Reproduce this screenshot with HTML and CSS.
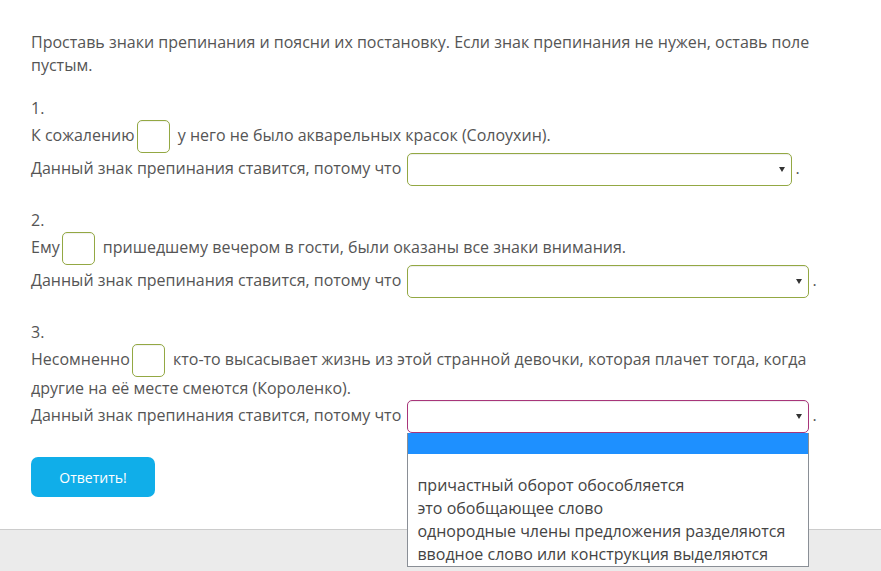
FILE: index.html
```html
<!DOCTYPE html>
<html lang="ru">
<head>
<meta charset="utf-8">
<title>Задание</title>
<link rel="stylesheet" href="styles.css">
</head>
<body>
<main class="content">
  <p class="intro">Проставь знаки препинания и поясни их постановку. Если знак препинания не нужен, оставь поле пустым.</p>

  <section class="task">
    <div class="num">1.</div>
    <div class="sentence">К сожалению<span class="gap-box"></span> у него не было акварельных красок (Солоухин).</div>
    <div class="reason">Данный знак препинания ставится, потому что <span class="select narrow"><span class="arrow"></span></span><span class="dot">.</span></div>
  </section>

  <section class="task">
    <div class="num">2.</div>
    <div class="sentence">Ему<span class="gap-box"></span> пришедшему вечером в гости, были оказаны все знаки внимания.</div>
    <div class="reason">Данный знак препинания ставится, потому что <span class="select"><span class="arrow"></span></span><span class="dot">.</span></div>
  </section>

  <section class="task last">
    <div class="num">3.</div>
    <div class="sentence">Несомненно<span class="gap-box"></span> кто-то высасывает жизнь из этой странной девочки, которая плачет тогда, когда другие на её месте смеются (Короленко).</div>
    <div class="reason">Данный знак препинания ставится, потому что <span class="select focused"><span class="arrow"></span>
        <ul class="dropdown">
          <li class="opt empty active"></li>
          <li class="opt empty"></li>
          <li class="opt">причастный оборот обособляется</li>
          <li class="opt">это обобщающее слово</li>
          <li class="opt">однородные члены предложения разделяются</li>
          <li class="opt">вводное слово или конструкция выделяются</li>
        </ul>
      </span><span class="dot">.</span></div>
  </section>

  <button class="submit" type="button">Ответить!</button>
</main>
<footer class="footer"></footer>
</body>
</html>
```

FILE: styles.css
```css
html, body {
  margin: 0;
  padding: 0;
  height: 100%;
}

body {
  display: flex;
  flex-direction: column;
  background: #ffffff;
  font-family: "Open Sans", "Liberation Sans", sans-serif;
  font-size: 16px;
  color: #555555;
}

.content {
  padding: 31px 31px 0;
  width: 819px;
}

.intro {
  margin: 0 0 20px;
  line-height: 23px;
}

.task {
  margin-bottom: 23px;
}

.task.last {
  margin-bottom: 24px;
}

.num {
  line-height: 23px;
}

.sentence {
  line-height: 23px;
}

.gap-box {
  display: inline-block;
  width: 33px;
  height: 33px;
  box-sizing: border-box;
  margin: 0 4px 0 2px;
  border: 1px solid #93a843;
  border-radius: 5px;
  background: #fff;
  box-shadow: inset 0 1px 1px rgba(0, 0, 0, 0.06);
  vertical-align: middle;
}

.reason {
  line-height: 23px;
}

.select {
  position: relative;
  display: inline-block;
  width: 402px;
  height: 33px;
  box-sizing: border-box;
  margin-left: 2px;
  border: 1px solid #93a843;
  border-radius: 5px;
  background: #fff;
  box-shadow: inset 0 1px 1px rgba(0, 0, 0, 0.07);
  vertical-align: middle;
}

.select.narrow {
  width: 385px;
}

.select.focused {
  border-color: #a8357a;
}

.arrow {
  position: absolute;
  right: 6px;
  top: 13px;
  width: 0;
  height: 0;
  border-left: 3px solid transparent;
  border-right: 3px solid transparent;
  border-top: 5px solid #333;
}

.dot {
  margin-left: 3px;
}

.dropdown {
  position: absolute;
  left: -1px;
  top: 32px;
  z-index: 5;
  width: 402px;
  box-sizing: border-box;
  margin: 0;
  padding: 0;
  list-style: none;
  background: #fff;
  border: 1px solid #8a8f96;
  border-top: none;
  color: #444;
  font-size: 16px;
  line-height: 23px;
}

.opt {
  height: 23px;
  padding-left: 9px;
  white-space: nowrap;
}

.opt.empty {
  height: 20px;
}

.opt.active {
  height: 21px;
  background: #1e90ff;
}

.submit {
  display: block;
  width: 124px;
  height: 40px;
  padding: 0;
  border: none;
  border-radius: 7px;
  background: #10aee9;
  color: #ffffff;
  font-family: "Open Sans", "Liberation Sans", sans-serif;
  font-size: 14px;
  cursor: pointer;
}

.footer {
  flex: 1;
  margin-top: 32px;
  border-top: 1px solid #cccccc;
  background: #ebebeb;
}
```
